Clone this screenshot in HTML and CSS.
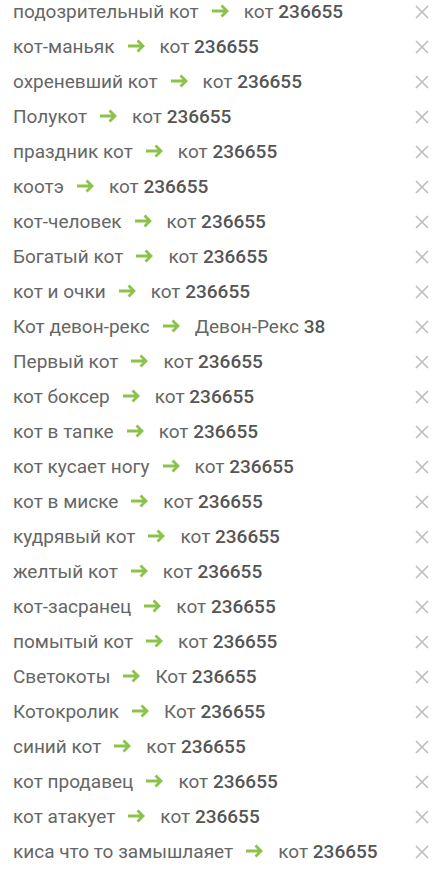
FILE: index.html
```html
<!DOCTYPE html>
<html lang="ru">
<head>
<meta charset="utf-8">
<link rel="stylesheet" href="styles.css">
</head>
<body>
<ul class="list">
  <li class="row"><span class="name">подозрительный кот</span><svg class="arrow" viewBox="0 0 18 14"><path d="M1 7H16M10.5 1.5L16 7L10.5 12.5"/></svg><span class="target">кот <b>236655</b></span><svg class="close" viewBox="0 0 14 14"><path d="M1 1L13 13M13 1L1 13"/></svg></li>
  <li class="row"><span class="name">кот-маньяк</span><svg class="arrow" viewBox="0 0 18 14"><path d="M1 7H16M10.5 1.5L16 7L10.5 12.5"/></svg><span class="target">кот <b>236655</b></span><svg class="close" viewBox="0 0 14 14"><path d="M1 1L13 13M13 1L1 13"/></svg></li>
  <li class="row"><span class="name">охреневший кот</span><svg class="arrow" viewBox="0 0 18 14"><path d="M1 7H16M10.5 1.5L16 7L10.5 12.5"/></svg><span class="target">кот <b>236655</b></span><svg class="close" viewBox="0 0 14 14"><path d="M1 1L13 13M13 1L1 13"/></svg></li>
  <li class="row"><span class="name">Полукот</span><svg class="arrow" viewBox="0 0 18 14"><path d="M1 7H16M10.5 1.5L16 7L10.5 12.5"/></svg><span class="target">кот <b>236655</b></span><svg class="close" viewBox="0 0 14 14"><path d="M1 1L13 13M13 1L1 13"/></svg></li>
  <li class="row"><span class="name">праздник кот</span><svg class="arrow" viewBox="0 0 18 14"><path d="M1 7H16M10.5 1.5L16 7L10.5 12.5"/></svg><span class="target">кот <b>236655</b></span><svg class="close" viewBox="0 0 14 14"><path d="M1 1L13 13M13 1L1 13"/></svg></li>
  <li class="row"><span class="name">коотэ</span><svg class="arrow" viewBox="0 0 18 14"><path d="M1 7H16M10.5 1.5L16 7L10.5 12.5"/></svg><span class="target">кот <b>236655</b></span><svg class="close" viewBox="0 0 14 14"><path d="M1 1L13 13M13 1L1 13"/></svg></li>
  <li class="row"><span class="name">кот-человек</span><svg class="arrow" viewBox="0 0 18 14"><path d="M1 7H16M10.5 1.5L16 7L10.5 12.5"/></svg><span class="target">кот <b>236655</b></span><svg class="close" viewBox="0 0 14 14"><path d="M1 1L13 13M13 1L1 13"/></svg></li>
  <li class="row"><span class="name">Богатый кот</span><svg class="arrow" viewBox="0 0 18 14"><path d="M1 7H16M10.5 1.5L16 7L10.5 12.5"/></svg><span class="target">кот <b>236655</b></span><svg class="close" viewBox="0 0 14 14"><path d="M1 1L13 13M13 1L1 13"/></svg></li>
  <li class="row"><span class="name">кот и очки</span><svg class="arrow" viewBox="0 0 18 14"><path d="M1 7H16M10.5 1.5L16 7L10.5 12.5"/></svg><span class="target">кот <b>236655</b></span><svg class="close" viewBox="0 0 14 14"><path d="M1 1L13 13M13 1L1 13"/></svg></li>
  <li class="row"><span class="name">Кот девон-рекс</span><svg class="arrow" viewBox="0 0 18 14"><path d="M1 7H16M10.5 1.5L16 7L10.5 12.5"/></svg><span class="target">Девон-Рекс <b>38</b></span><svg class="close" viewBox="0 0 14 14"><path d="M1 1L13 13M13 1L1 13"/></svg></li>
  <li class="row"><span class="name">Первый кот</span><svg class="arrow" viewBox="0 0 18 14"><path d="M1 7H16M10.5 1.5L16 7L10.5 12.5"/></svg><span class="target">кот <b>236655</b></span><svg class="close" viewBox="0 0 14 14"><path d="M1 1L13 13M13 1L1 13"/></svg></li>
  <li class="row"><span class="name">кот боксер</span><svg class="arrow" viewBox="0 0 18 14"><path d="M1 7H16M10.5 1.5L16 7L10.5 12.5"/></svg><span class="target">кот <b>236655</b></span><svg class="close" viewBox="0 0 14 14"><path d="M1 1L13 13M13 1L1 13"/></svg></li>
  <li class="row"><span class="name">кот в тапке</span><svg class="arrow" viewBox="0 0 18 14"><path d="M1 7H16M10.5 1.5L16 7L10.5 12.5"/></svg><span class="target">кот <b>236655</b></span><svg class="close" viewBox="0 0 14 14"><path d="M1 1L13 13M13 1L1 13"/></svg></li>
  <li class="row"><span class="name">кот кусает ногу</span><svg class="arrow" viewBox="0 0 18 14"><path d="M1 7H16M10.5 1.5L16 7L10.5 12.5"/></svg><span class="target">кот <b>236655</b></span><svg class="close" viewBox="0 0 14 14"><path d="M1 1L13 13M13 1L1 13"/></svg></li>
  <li class="row"><span class="name">кот в миске</span><svg class="arrow" viewBox="0 0 18 14"><path d="M1 7H16M10.5 1.5L16 7L10.5 12.5"/></svg><span class="target">кот <b>236655</b></span><svg class="close" viewBox="0 0 14 14"><path d="M1 1L13 13M13 1L1 13"/></svg></li>
  <li class="row"><span class="name">кудрявый кот</span><svg class="arrow" viewBox="0 0 18 14"><path d="M1 7H16M10.5 1.5L16 7L10.5 12.5"/></svg><span class="target">кот <b>236655</b></span><svg class="close" viewBox="0 0 14 14"><path d="M1 1L13 13M13 1L1 13"/></svg></li>
  <li class="row"><span class="name">желтый кот</span><svg class="arrow" viewBox="0 0 18 14"><path d="M1 7H16M10.5 1.5L16 7L10.5 12.5"/></svg><span class="target">кот <b>236655</b></span><svg class="close" viewBox="0 0 14 14"><path d="M1 1L13 13M13 1L1 13"/></svg></li>
  <li class="row"><span class="name">кот-засранец</span><svg class="arrow" viewBox="0 0 18 14"><path d="M1 7H16M10.5 1.5L16 7L10.5 12.5"/></svg><span class="target">кот <b>236655</b></span><svg class="close" viewBox="0 0 14 14"><path d="M1 1L13 13M13 1L1 13"/></svg></li>
  <li class="row"><span class="name">помытый кот</span><svg class="arrow" viewBox="0 0 18 14"><path d="M1 7H16M10.5 1.5L16 7L10.5 12.5"/></svg><span class="target">кот <b>236655</b></span><svg class="close" viewBox="0 0 14 14"><path d="M1 1L13 13M13 1L1 13"/></svg></li>
  <li class="row"><span class="name">Светокоты</span><svg class="arrow" viewBox="0 0 18 14"><path d="M1 7H16M10.5 1.5L16 7L10.5 12.5"/></svg><span class="target">Кот <b>236655</b></span><svg class="close" viewBox="0 0 14 14"><path d="M1 1L13 13M13 1L1 13"/></svg></li>
  <li class="row"><span class="name">Котокролик</span><svg class="arrow" viewBox="0 0 18 14"><path d="M1 7H16M10.5 1.5L16 7L10.5 12.5"/></svg><span class="target">Кот <b>236655</b></span><svg class="close" viewBox="0 0 14 14"><path d="M1 1L13 13M13 1L1 13"/></svg></li>
  <li class="row"><span class="name">синий кот</span><svg class="arrow" viewBox="0 0 18 14"><path d="M1 7H16M10.5 1.5L16 7L10.5 12.5"/></svg><span class="target">кот <b>236655</b></span><svg class="close" viewBox="0 0 14 14"><path d="M1 1L13 13M13 1L1 13"/></svg></li>
  <li class="row"><span class="name">кот продавец</span><svg class="arrow" viewBox="0 0 18 14"><path d="M1 7H16M10.5 1.5L16 7L10.5 12.5"/></svg><span class="target">кот <b>236655</b></span><svg class="close" viewBox="0 0 14 14"><path d="M1 1L13 13M13 1L1 13"/></svg></li>
  <li class="row"><span class="name">кот атакует</span><svg class="arrow" viewBox="0 0 18 14"><path d="M1 7H16M10.5 1.5L16 7L10.5 12.5"/></svg><span class="target">кот <b>236655</b></span><svg class="close" viewBox="0 0 14 14"><path d="M1 1L13 13M13 1L1 13"/></svg></li>
  <li class="row"><span class="name">киса что то замышлаяет</span><svg class="arrow" viewBox="0 0 18 14"><path d="M1 7H16M10.5 1.5L16 7L10.5 12.5"/></svg><span class="target">кот <b>236655</b></span><svg class="close" viewBox="0 0 14 14"><path d="M1 1L13 13M13 1L1 13"/></svg></li>
</ul>
</body>
</html>
```
FILE: styles.css
```css
html, body {
  margin: 0;
  padding: 0;
  background: #ffffff;
}
body {
  font-family: Roboto, "Noto Sans", sans-serif;
  font-size: 19px;
  color: #666666;
  overflow: hidden;
}
.list {
  list-style: none;
  margin: -6px 0 0 0;
  padding: 0 14px 0 13px;
}
.row {
  display: flex;
  align-items: center;
  height: 35px;
}
.name {
  white-space: nowrap;
}
.arrow {
  width: 18px;
  height: 14px;
  margin: -2px 15px 0 12px;
  flex: none;
}
.arrow path {
  fill: none;
  stroke: #8bc34a;
  stroke-width: 2.8;
}
.target {
  white-space: nowrap;
  flex: 1;
}
.target b {
  font-weight: 500;
  color: #555555;
}
.close {
  width: 14px;
  height: 14px;
  flex: none;
}
.close path {
  fill: none;
  stroke: #bdbdbd;
  stroke-width: 1.6;
}
```
